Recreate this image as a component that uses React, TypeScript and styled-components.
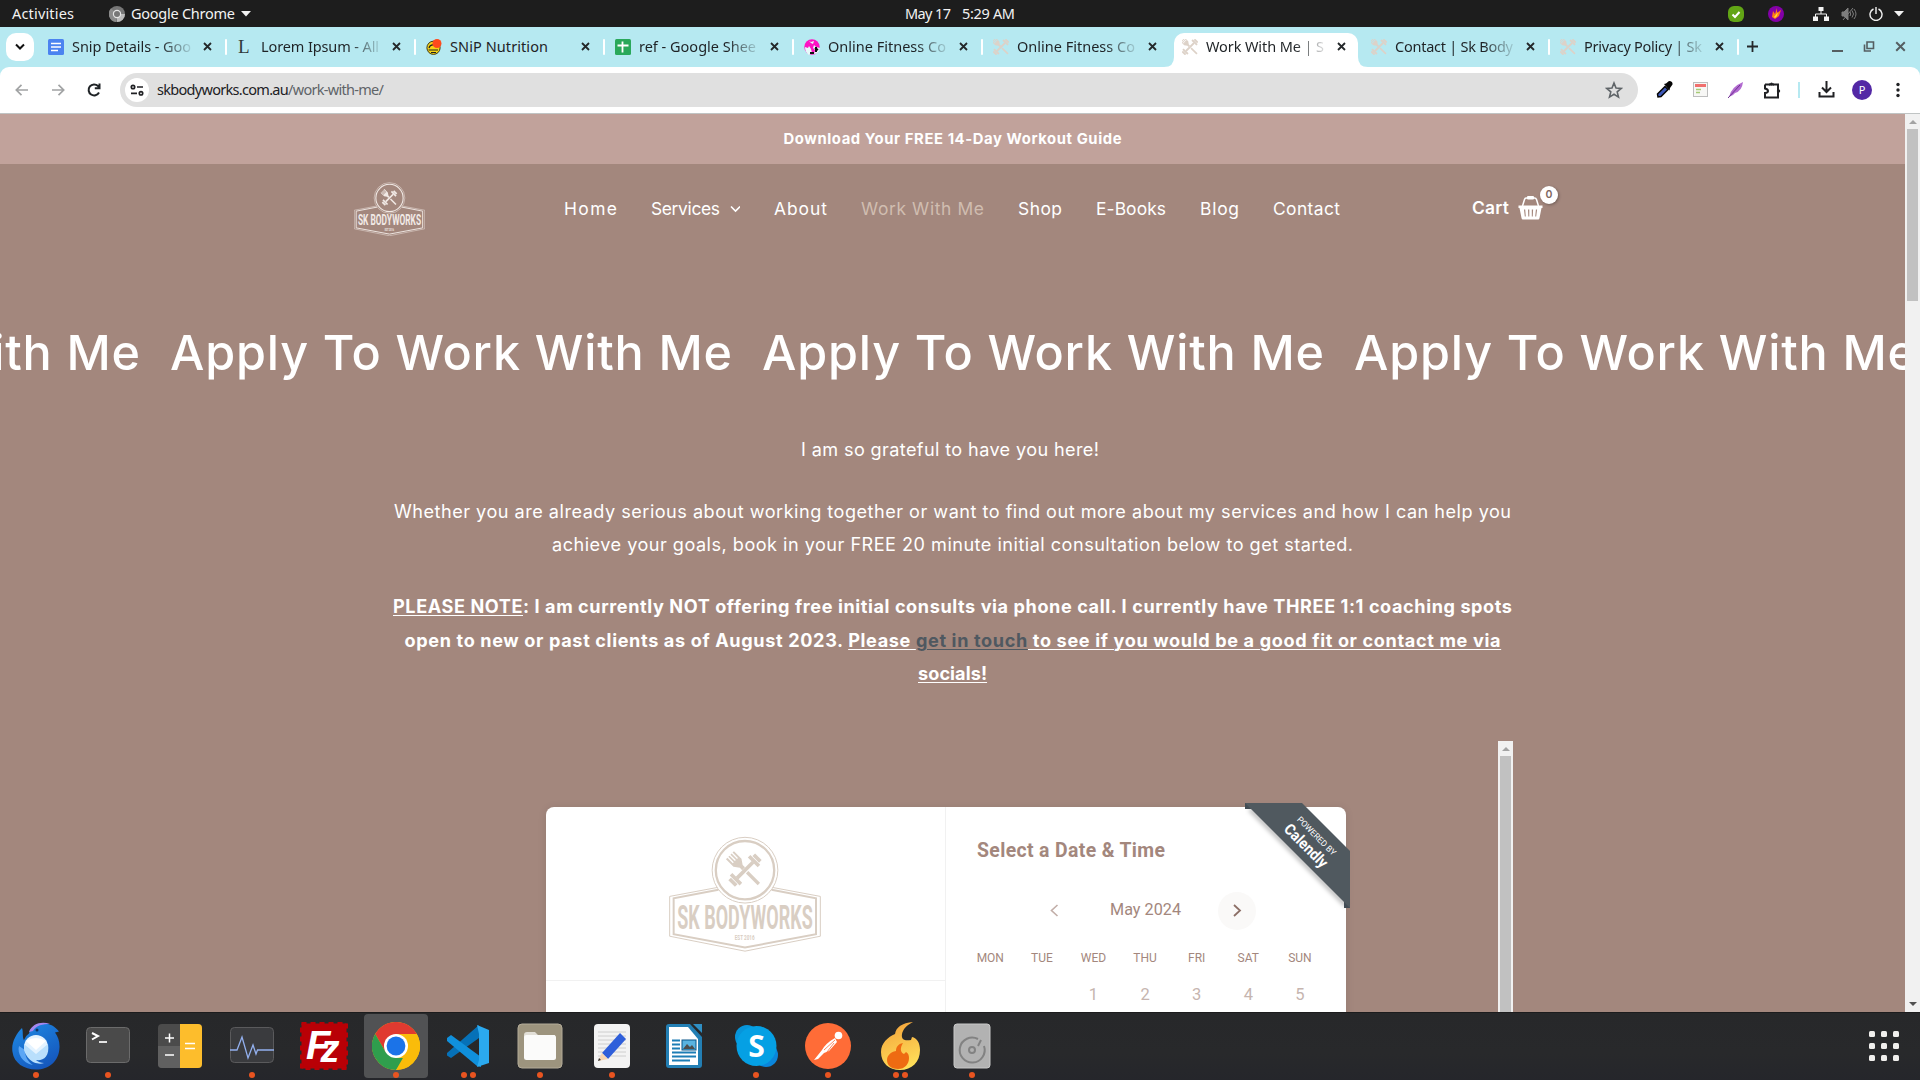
import React, { useLayoutEffect, useRef, useState } from "react";
import styled, { createGlobalStyle, css } from "styled-components";

const system = '"Noto Sans", "Open Sans", sans-serif';
const brand = 'Inter, "Open Sans", sans-serif';
const widget = 'Roboto, "Open Sans", sans-serif';

const GlobalStyle = createGlobalStyle`
  * { box-sizing: border-box; }
  body { margin: 0; overflow: hidden; background: #1d1d1d; }
`;

/* ---------- Text that is tracked to fill a given measure ---------- */

const Measure = styled.span<{ $width: number }>`
  display: block;
  flex: none;
  width: ${(p) => p.$width}px;
  white-space: pre;
`;

function Tracked({ width, children }: { width: number; children: React.ReactNode }) {
  const ref = useRef<HTMLSpanElement>(null);
  const [tracking, setTracking] = useState(0);
  useLayoutEffect(() => {
    const el = ref.current;
    if (!el) return;
    const natural = el.getBoundingClientRect().width;
    const count = (el.textContent || "").length;
    setTracking((width - natural) / Math.max(1, count - 1));
  }, [width]);
  return (
    <Measure $width={width}>
      <span ref={ref} style={{ letterSpacing: tracking }}>
        {children}
      </span>
    </Measure>
  );
}

/* ---------- Desktop ---------- */

const Screen = styled.div`
  width: 1920px;
  height: 1080px;
  display: grid;
  grid-template-rows: 27px 40px 47px 898px 68px;
  overflow: hidden;
`;

const TopBar = styled.header`
  display: grid;
  grid-template-columns: 1fr auto 1fr;
  align-items: center;
  padding: 0 16px 0 12px;
  background: #1d1d1d;
  color: #f2f2f2;
  font: 14.5px/27px ${system};
`;

const TopGroup = styled.div<{ $end?: boolean }>`
  display: flex;
  align-items: center;
  ${(p) => p.$end && css`justify-content: flex-end;`}
`;

const AppMenu = styled.div`
  display: flex;
  align-items: center;
  gap: 6px;
  margin-left: 35px;
`;

const Clock = styled.div`
  display: flex;
  gap: 11px;
  padding-left: 4px;
`;

const TrayIcon = styled.span<{ $gap: number }>`
  display: flex;
  margin-left: ${(p) => p.$gap}px;
`;

/* ---------- Browser chrome ---------- */

const TabStrip = styled.div`
  display: flex;
  align-items: flex-start;
  padding: 6px 8px 0 6px;
  background: #b6e9f1;
  color: #1f2326;
  font: 14.5px/27px ${system};
`;

const TabSearch = styled.button`
  width: 28px;
  height: 28px;
  margin-right: 4px;
  padding: 0;
  display: grid;
  place-items: center;
  border: 0;
  border-radius: 10px;
  background: #fff;
`;

const TabBox = styled.div<{ $active?: boolean }>`
  position: relative;
  width: 189px;
  height: 34px;
  padding: 0 0 7px 10px;
  display: flex;
  align-items: center;
  ${(p) =>
    p.$active &&
    css`
      &::before {
        content: "";
        position: absolute;
        inset: 0 3px 0 2px;
        background: #fff;
        border-radius: 10px 10px 0 0;
      }
      & > svg:not([data-foot]), & > div, & > span { position: relative; }
    `}
`;

const Foot = styled.svg<{ $right?: boolean }>`
  position: absolute;
  bottom: 0;
  ${(p) => (p.$right ? "right: -7px; transform: scaleX(-1);" : "left: -8px;")}
`;

const TabTitle = styled.div<{ $fade: boolean }>`
  width: 119px;
  margin-left: 8px;
  overflow: hidden;
  ${(p) => p.$fade && css`mask-image: linear-gradient(to right, #000 88px, rgba(0, 0, 0, 0.12) 119px);`}
`;

const TabClose = styled.span`
  display: flex;
  margin-left: 12px;
`;

const TabDivider = styled.i<{ $hidden?: boolean }>`
  width: 2px;
  height: 16px;
  margin-left: auto;
  border-radius: 1px;
  background: ${(p) => (p.$hidden ? "transparent" : "#fff")};
`;

const NewTab = styled.span`
  display: flex;
  margin: 8px 0 0 8px;
`;

const WindowButtons = styled.div`
  display: flex;
  align-items: center;
  gap: 20px;
  height: 27px;
  margin-left: auto;
  padding-right: 6px;
`;

const ToolbarBacking = styled.div`
  display: flex;
  background: #b6e9f1;
`;

const Toolbar = styled.div`
  flex: 1;
  display: flex;
  align-items: center;
  padding: 0 4px 1px 12px;
  background: #fff;
  border-bottom: 1px solid #c0c4c4;
  border-radius: 9px 9px 0 0;
`;

const NavArrows = styled.div`
  display: flex;
  gap: 16px;
  width: 108px;
`;

const UrlField = styled.div`
  display: flex;
  align-items: center;
  width: 1518px;
  height: 34px;
  padding: 0 15px 0 5px;
  border-radius: 17px;
  background: #e0e0e0;
  color: #202124;
  font: 14.5px/32px ${system};
`;

const SiteInfo = styled.span`
  width: 24px;
  height: 24px;
  margin-right: 8px;
  display: grid;
  place-items: center;
  border-radius: 50%;
  background: #fff;
`;

const UrlText = styled.div`
  height: 34px;
`;

const UrlPath = styled.span`
  color: #5f6468;
`;

const Push = styled.span`
  margin-left: auto;
  display: flex;
`;

const ToolIcons = styled.div`
  display: grid;
  grid-template-columns: repeat(4, 36px) 18px repeat(3, 36px);
  place-items: center;
  margin-left: 8px;
`;

const ToolDivider = styled.i`
  width: 2px;
  height: 16px;
  background: #b6e9f1;
`;

const Avatar = styled.span`
  width: 20px;
  height: 20px;
  border-radius: 50%;
  background: #5328a5;
  color: #fff;
  text-align: center;
  font: 11px/20px ${system};
`;

/* ---------- Web page ---------- */

const Viewport = styled.div`
  display: flex;
  min-height: 0;
  overflow: hidden;
`;

const Page = styled.main`
  width: 1905px;
  height: 898px;
  overflow: hidden;
  background: #a3877d;
  color: #fff;
  font-family: ${brand};
`;

const ScrollTrack = styled.div`
  width: 15px;
  height: 100%;
  flex: none;
  display: flex;
  flex-direction: column;
  align-items: center;
  background: #f1f1f1;
`;

const ScrollArrow = styled.i<{ $down?: boolean; $dim?: boolean }>`
  width: 0;
  height: 0;
  margin: ${(p) => (p.$down ? "auto 0 6px" : "6px 0 5px")};
  border: 4px solid transparent;
  border-top-width: ${(p) => (p.$down ? 4 : 0)}px;
  border-bottom-width: ${(p) => (p.$down ? 0 : 4)}px;
  border-${(p) => (p.$down ? "top" : "bottom")}-color: ${(p) => (p.$dim ? "#a3a3a3" : "#505050")};
`;

const ScrollThumb = styled.i<{ $height: number }>`
  width: 11px;
  height: ${(p) => p.$height}px;
  flex: none;
  background: #c1c1c1;
`;

const Banner = styled.div`
  height: 50px;
  display: flex;
  justify-content: center;
  background: #c1a29b;
  font-weight: 700;
  font-size: 14.8px;
  line-height: 50px;
`;

const SiteHeader = styled.div`
  height: 90px;
  display: flex;
  align-items: center;
  padding-left: 354px;
  font-size: 17.4px;
  line-height: 24px;
`;

const SiteNav = styled.nav`
  display: flex;
  gap: 34px;
  width: 908px;
  margin-left: 139px;
`;

const NavItem = styled.a<{ $current?: boolean }>`
  display: flex;
  align-items: center;
  gap: 10px;
  color: ${(p) => (p.$current ? "#d0bdb0" : "#fff")};
`;

const Cart = styled.div`
  position: relative;
  display: flex;
  align-items: center;
  gap: 9px;
  margin-top: -2px;
  font-weight: 600;
`;

const CartBadge = styled.span`
  position: absolute;
  left: 68px;
  top: -10px;
  width: 18px;
  height: 18px;
  border-radius: 50%;
  background: #fff;
  color: #80675f;
  text-align: center;
  font-size: 10.5px;
  line-height: 18px;
  box-shadow: 1px 1px 3px rgba(0, 0, 0, 0.3);
`;

const Marquee = styled.h1`
  width: 1905px;
  height: 60px;
  margin: 69px 0 49px;
  overflow: hidden;
  font-size: 48.5px;
  line-height: 59px;
  font-weight: 500;
`;

const MarqueeTrack = styled.div`
  display: flex;
  gap: 30px;
  margin-left: -422px;
`;

const Copy = styled.section`
  display: flex;
  flex-direction: column;
  align-items: center;
  gap: 28.6px;
  padding-top: 0.6px;
  font-size: 18.1px;
  line-height: 33.5px;
`;

const Paragraph = styled.p<{ $strong?: boolean; $shift?: number }>`
  display: flex;
  flex-direction: column;
  align-items: center;
  margin: 0;
  padding-right: ${(p) => p.$shift || 0}px;
  font-weight: ${(p) => (p.$strong ? 700 : 400)};
  u { text-decoration-thickness: 1px; text-underline-offset: 2px; }
`;

const TouchLink = styled.a`
  color: #4f5860;
  text-decoration: underline;
  text-decoration-thickness: 1px;
  text-underline-offset: 2px;
`;

/* ---------- Booking widget ---------- */

const Embed = styled.div`
  display: flex;
  justify-content: space-between;
  width: 967px;
  height: 400px;
  margin: 50px 0 0 546px;
`;

const EmbedScroll = styled.div`
  display: flex;
  height: 271px;
  overflow: hidden;
`;

const BookingCard = styled.div`
  position: relative;
  width: 800px;
  height: 320px;
  margin-top: 66px;
  display: grid;
  grid-template-columns: 400px 400px;
  border-radius: 8px;
  background: #fff;
  box-shadow: 0 1px 8px rgba(0, 0, 0, 0.1);
`;

const HostPane = styled.div`
  border-right: 1px solid #f1f1f1;
`;

const HostLogo = styled.div`
  height: 174px;
  display: grid;
  justify-content: center;
  padding: 29px 2px 0 0;
  border-bottom: 1px solid #f1f1f1;
`;

const PickerPane = styled.div`
  padding: 29px 0 0 31px;
  color: #a3877d;
  font-family: ${widget};
`;

const PickerTitle = styled.h2`
  margin: 0;
  font-size: 19.4px;
  line-height: 30px;
  font-weight: 700;
`;

const MonthRow = styled.div`
  display: flex;
  align-items: center;
  height: 38px;
  margin-top: 26px;
  padding-left: 72px;
  font-size: 16.2px;
  line-height: 35px;
`;

const MonthLabel = styled.span`
  width: 108px;
  height: 38px;
  margin-left: 50px;
`;

const NextMonth = styled.span`
  width: 38px;
  height: 38px;
  display: grid;
  place-items: center;
  border-radius: 50%;
  background: #faf9f8;
`;

const WeekRow = styled.div<{ $days?: boolean }>`
  display: grid;
  grid-template-columns: repeat(7, 51.6px);
  justify-items: center;
  margin-left: -12.5px;
  margin-top: ${(p) => (p.$days ? 17 : 18)}px;
  font-size: ${(p) => (p.$days ? 16.5 : 12)}px;
  line-height: 20px;
  color: ${(p) => (p.$days ? "#c6b5af" : "#a3877d")};
`;

const Ribbon = styled.svg`
  position: absolute;
  left: 699px;
  top: -4px;
  font-family: ${widget};
`;

/* ---------- Dock ---------- */

const Dock = styled.footer`
  display: flex;
  background: linear-gradient(#27282a, #28292b 60%, #25262b);
  border-top: 1px solid #1c1c1d;
`;

const DockSlot = styled.div<{ $active?: boolean }>`
  width: 64px;
  height: 64px;
  margin: 1px 4px 0;
  padding-top: 8px;
  display: flex;
  flex-direction: column;
  align-items: center;
  border-radius: 4px;
  background: ${(p) => (p.$active ? "#515254" : "transparent")};
`;

const Dots = styled.div`
  display: flex;
  gap: 3px;
  height: 6px;
  margin-top: 2px;
  i { width: 6px; height: 6px; border-radius: 50%; background: #e95420; }
`;

const AppGrid = styled.div`
  display: grid;
  grid-template-columns: repeat(3, 6px);
  grid-auto-rows: 6px;
  gap: 6px;
  margin: 18px 21px 0 auto;
  i { border-radius: 1.5px; background: #f0efed; }
`;

/* ---------- Drawings ---------- */

const CrossMark = () => (
  <>
    <g transform="rotate(-45)">
      <path d="M-17-64h6v23h4v-23h5v23h4v-23h5v23h4v-23h6v32l-11 16v10H-6v-10l-11-16z" />
      <rect x="-5" y="9" width="10" height="50" />
    </g>
    <g transform="rotate(45)">
      <rect x="-5.5" y="-34" width="11" height="68" />
      <path d="M-21-44h42v11h-42zM-14-57h28v11h-28zM-21 33h42v11h-42zM-14 46h28v11h-28z" />
    </g>
  </>
);

const BodyworksLogo = ({ width, color }: { width: number; color: string }) => (
  <svg width={width} height={(width * 350) / 458} viewBox="-1 -1 458 350" fill="none" stroke={color}>
    <path d="M145 154 1 181v120l227 45 227-45V181l-144-27" strokeWidth="3" />
    <path d="M148 161 13 187v108l215 40 214-40V187l-134-26" strokeWidth="6" />
    <circle cx="228" cy="102" r="99" strokeWidth="3" />
    <circle cx="228" cy="102" r="88" strokeWidth="7" />
    <g fill={color} stroke="none">
      <g transform="translate(228 102)"><CrossMark /></g>
      <g fontFamily={widget} fontWeight="700">
        <text x="24" y="278" fontSize="100" textLength="408" lengthAdjust="spacingAndGlyphs">SK BODYWORKS</text>
        <text x="197" y="312" fontSize="21" textLength="60" lengthAdjust="spacingAndGlyphs">EST 2016</text>
      </g>
    </g>
  </svg>
);

const CrossFavicon = () => (
  <svg width="16" height="16" viewBox="-48 -48 96 96" fill="#ddd2c8"><CrossMark /></svg>
);
const DocsIcon = () => (
  <svg width="16" height="16"><rect width="16" height="16" rx="1.5" fill="#4b83f0" /><path d="M3 4.5h10M3 8h10M3 11.5h7" stroke="#fff" strokeWidth="1.7" /></svg>
);
const LoremIcon = () => (
  <svg width="16" height="16" fill="#30393b"><text x="1" y="14" fontFamily='"Liberation Serif", serif' fontSize="19">L</text></svg>
);
const SnipIcon = () => (
  <svg width="16" height="16"><circle cx="7.5" cy="8.8" r="6.600" fill="#f5d416" stroke="#413a16" /><path d="M3 9q1-4 5-3M2.500 11h9.500M5 13.500h5" stroke="#222" strokeWidth="1.2" fill="none" /><circle cx="11" cy="4.500" r="4.500" fill="#ff4a1c" /></svg>
);
const SheetsIcon = () => (
  <svg width="16" height="16"><rect width="16" height="16" rx="1.5" fill="#2aa85a" /><path d="M7.500 2.500v11M2.500 6.500h11" stroke="#fff" strokeWidth="1.8" /></svg>
);
const PinkIcon = () => (
  <svg width="16" height="16"><circle cx="8" cy="8" r="7.7" fill="#ff12c4" /><path d="M1 8l3 1 1-2 2 3 1 4-3 2C2 14 1 11 1 8zM10 6l2 2 4 1c0 3-3 6-6 6l1-4-2-2zM5 2l2 1 3-1-1 3-2-1z" fill="#e8fafa" /><path d="M6 14h4M12 8v5M11 9l3 2" stroke="#111" strokeWidth="2" /></svg>
);

const Cross = ({ size = 9, color = "#24282a", weight = 1.8 }: { size?: number; color?: string; weight?: number }) => (
  <svg width={size} height={size} viewBox="0 0 9 9"><path d="M1 1l7 7M8 1L1 8" stroke={color} strokeWidth={weight} /></svg>
);
const Chevron = ({ d, w, h, color, weight = 1.6 }: { d: string; w: number; h: number; color: string; weight?: number }) => (
  <svg width={w} height={h} fill="none" stroke={color} strokeWidth={weight}><path d={d} /></svg>
);
const CaretDown = () => (<svg width="10" height="6"><path d="M0 0h10L5 5.5z" fill="#f2f2f2" /></svg>);

const Basket = () => (
  <svg width="25" height="24" viewBox="0 0 25 24">
    <path d="M4.5 10 6.5 3.5Q7 2 8.5 2h8q1.500 0 2 1.500L20.500 10" fill="none" stroke="#fff" strokeWidth="1.500" />
    <rect x="9" y="0" width="7" height="3.500" rx="1" fill="#fff" />
    <path fillRule="evenodd" fill="#fff" d="M.5 9.500h24v2.500h-1L21.500 22q-.2 1.500-1.500 1.500H5Q3.700 23.500 3.500 22L1.500 12h-1zM6 13.500l.8 7h1l-.6-7zM10 13.500l.3 7h1v-7zM13.800 13.500v7h1l.3-7zM17.900 13.500l-.7 7h1l.9-7z" />
  </svg>
);

const Back = ({ flip }: { flip?: boolean }) => (
  <svg width="20" height="20" viewBox="0 0 20 20" fill="none" stroke="#a1a3a4" strokeWidth="1.7">
    <path d={flip ? "M4 10h11M10.500 4.800 15.700 10l-5.200 5.200" : "M16 10H5M9.500 4.800 4.300 10l5.200 5.200"} />
  </svg>
);
const Reload = () => (
  <svg width="20" height="20" viewBox="0 0 20 20" fill="none" stroke="#1f2326" strokeWidth="2"><path d="M15 12.500A5.500 5.500 0 1 1 14 6l1.500 1.700M15.500 3.500v4.700h-4.700" /></svg>
);

type DockKind = "mail" | "term" | "calc" | "monitor" | "filezilla" | "chrome" | "code" | "files" | "editor" | "writer" | "skype" | "postman" | "flame" | "disk";

const dockArt: Record<DockKind, React.ReactNode> = {
  mail: (
    <>
      <defs><linearGradient id="bird" x1="0" y1="0" x2="0.600" y2="1"><stop offset="0" stopColor="#1f8ce6" /><stop offset="1" stopColor="#1558bd" /></linearGradient></defs>
      <path d="M10 6C4 12-1 21 .500 30 2 41 12 47.500 24 47.500c13 0 23-8 23.500-22 .3-6-1.500-11-4.500-15l4-1C43 4 37 1 30 1.500c-8 .5-12 6-13 10-4 3-5 7-5 7C10 14 11.500 10 10 6z" fill="url(#bird)" />
      <path d="M17 10C20 2 29-1 38 2c-7 0-14 1-17 7z" fill="#a487ef" />
      <path d="M7 24c-2 7 3 17 14 19-6-4-8-9-8-15z" fill="#5ba6f5" />
      <circle cx="24" cy="25" r="12" fill="#e4f3ff" />
      <path d="M12 22l12 10 12-10c2 13-5 17-12 16 2 2 5 3 8 3-8 3-21-4-20-19z" fill="#b9dffc" />
      <path d="M14 19l10 9 10-9q-10-6-20 0z" fill="#fff" />
      <circle cx="25" cy="8" r="1.500" fill="#14315e" />
    </>
  ),
  term: (
    <><rect x="2.500" y="5.500" width="43" height="35" rx="4" fill="#4a4a4a" stroke="#6b6b6b" /><path d="M8 11l6 3-6 3.500" fill="none" stroke="#fff" strokeWidth="2" /><path d="M15 20h8" stroke="#fff" strokeWidth="1.700" /></>
  ),
  calc: (
    <><rect x="2" y="2" width="44" height="44" rx="4" fill="#4b4b4b" /><path d="M2 24h22v22H6q-4 0-4-4z" fill="#606060" /><path d="M24 2h18q4 0 4 4v36q0 4-4 4H24z" fill="#fdbd2c" /><path d="M9 16h9M13.500 11.500v9M9 33h9M29 21.500h10M29 26.500h10" stroke="#fff" strokeWidth="1.500" /></>
  ),
  monitor: (
    <><rect x="2.500" y="5.500" width="43" height="35" rx="4" fill="#3a3b3e" stroke="#5a5a5c" /><path d="M2 28h7L14 15l6 21 5-13 3 9 1.500-4H46" fill="none" stroke="#93b0ee" strokeWidth="1.300" /></>
  ),
  filezilla: (
    <><rect x="1.500" y="1.500" width="45" height="45" fill="#b90006" /><rect x="1.500" y="1.500" width="45" height="45" fill="none" stroke="#b90006" strokeWidth="3.500" strokeDasharray="5 4" />
      <text x="6" y="37" fill="#fff" fontFamily='"Liberation Sans", sans-serif' fontWeight="700" fontStyle="italic" fontSize="40">F<tspan dx="-10" dy="3" fontSize="38">z</tspan></text></>
  ),
  chrome: (
    <>
      <circle cx="24" cy="24" r="24" fill="#fabc0a" />
      <path d="M3.200 12A24 24 0 0 1 44.800 12H24L13.600 30z" fill="#e03a30" />
      <path d="M3.200 12 13.600 30 24 36h10.400L24 48A24 24 0 0 1 3.200 12z" fill="#2f9e4d" />
      <path d="M34.400 30 24 48A24 24 0 0 0 44.800 12H24z" fill="#fabc0a" />
      <circle cx="24" cy="24" r="12" fill="#fff" /><circle cx="24" cy="24" r="9.400" fill="#1b73e8" />
    </>
  ),
  code: (
    <><path d="M3 31 35 3v13L7 36l-4-2.500z" fill="#0671b8" /><path d="M3 16l4-3 30 22v10l-4-1L3 19z" fill="#1090dc" /><path d="M33 3l12 5v33l-12 4 2-7V12z" fill="#2ba9ef" /></>
  ),
  files: (
    <><rect x="2" y="2" width="44" height="44" rx="4" fill="#9d947e" stroke="#b3ab98" /><path d="M8 13q0-3 3-3h8l3 3h17v10H8z" fill="#e2dfd7" /><rect x="8" y="13" width="32" height="25" rx="2.500" fill="#fbfbfa" /></>
  ),
  editor: (
    <><rect x="6" y="2" width="36" height="44" rx="4" fill="#f3f3f3" /><path d="M10 10h28M10 14h28M10 18h28M10 22h28M10 26h28M10 30h28M10 34h28" stroke="#cecece" /><path d="M14 31 32 11l6 6-18 20z" fill="#2f5fda" /><path d="M14 31l6 6-10 2z" fill="#f7d6b2" /><path d="M11 36l2 2-3 1z" fill="#333" /></>
  ),
  writer: (
    <><path d="M9 2h21l12 13v28q0 3-3 3H9q-3 0-3-3V5q0-3 3-3z" fill="#237fb4" /><path d="M33 2h9v9z" fill="#2f8fc4" /><path d="M9 5h19l10 12v26H9z" fill="#fff" /><path d="M12 18.500h8M12 22.500h8M12 26.500h8M12 30.500h24M12 34.500h24M12 38.500h18" stroke="#1c7db5" strokeWidth="2" /><rect x="22" y="18" width="14" height="10" fill="#59b3e0" stroke="#0b578a" /><path d="M23 27l4-5 3 3 2-2 3 4z" fill="#4d4d4d" /></>
  ),
  skype: (
    <><circle cx="15" cy="15" r="12" fill="#0795da" /><circle cx="34" cy="33" r="12" fill="#0a86dc" /><circle cx="24.500" cy="24" r="20" fill="#05a0e4" /><text x="24.500" y="35" textAnchor="middle" fill="#fff" fontFamily='"Open Sans", sans-serif' fontWeight="700" fontSize="30">S</text></>
  ),
  postman: (
    <><circle cx="24" cy="24" r="23" fill="#ff6c37" /><circle cx="34.500" cy="13.500" r="3.800" fill="#fff" /><path d="M31 16q-9 5-13 12l-8 10 4-1 6-6 5-2 8-9z" fill="#fff" /><path d="M20 28 31 18M23 30l7-9" stroke="#ff6c37" strokeWidth="0.800" /></>
  ),
  flame: (
    <><defs><linearGradient id="fire" x1="0.300" y1="0" x2="0.600" y2="1"><stop offset="0" stopColor="#f4a43c" /><stop offset="1" stopColor="#ffe15a" /></linearGradient></defs>
      <path d="M37 0C26 1 20 5 19 12 12 15 5 21 5 30c0 11 8 18 19 18 12 0 20-8 20-20 0-7-3-12-8-13l-1 3c-6 1-10 0-9-6 1-5 5-9 11-12z" fill="url(#fire)" /><path d="M27 21c-5 1-7 4-7 8-6 1-9 5-9 9 0 6 5 9 11 9 7 0 11-5 11-11 0-3-1-5-3-6l-2 2c-4-2-4-6-1-11z" fill="#ee6b12" /></>
  ),
  disk: (
    <><rect x="6" y="2" width="36" height="44" rx="3" fill="#b2b2b2" stroke="#c8c8c8" /><path d="M30 17a12.500 12.500 0 1 0 6 7" fill="none" stroke="#828282" strokeWidth="2" /><path d="M30 24l3-6" stroke="#828282" strokeWidth="2" /><circle cx="24" cy="28" r="3" fill="none" stroke="#828282" strokeWidth="2" /></>
  ),
};

/* ---------- Data ---------- */

const tabs = [
  { icon: <DocsIcon />, title: "Snip Details - Goo", width: 119, fade: true },
  { icon: <LoremIcon />, title: "Lorem Ipsum - All", width: 118, fade: true },
  { icon: <SnipIcon />, title: "SNiP Nutrition", width: 98, fade: false },
  { icon: <SheetsIcon />, title: "ref - Google Shee", width: 117, fade: true },
  { icon: <PinkIcon />, title: "Online Fitness Co", width: 118, fade: true },
  { icon: <CrossFavicon />, title: "Online Fitness Co", width: 118, fade: true },
  { icon: <CrossFavicon />, title: "Work With Me | S", width: 118, fade: true, active: true },
  { icon: <CrossFavicon />, title: "Contact | Sk Body", width: 118, fade: true },
  { icon: <CrossFavicon />, title: "Privacy Policy | Sk", width: 118, fade: true },
];

const navLinks = [
  { label: "Home", width: 53 },
  { label: "Services", width: 69, menu: true },
  { label: "About", width: 53 },
  { label: "Work With Me", width: 123, current: true },
  { label: "Shop", width: 44 },
  { label: "E-Books", width: 70 },
  { label: "Blog", width: 39 },
  { label: "Contact", width: 67 },
];

const dockApps: { kind: DockKind; windows: number }[] = [
  { kind: "mail", windows: 1 },
  { kind: "term", windows: 1 },
  { kind: "calc", windows: 0 },
  { kind: "monitor", windows: 1 },
  { kind: "filezilla", windows: 0 },
  { kind: "chrome", windows: 1 },
  { kind: "code", windows: 2 },
  { kind: "files", windows: 1 },
  { kind: "editor", windows: 1 },
  { kind: "writer", windows: 0 },
  { kind: "skype", windows: 1 },
  { kind: "postman", windows: 1 },
  { kind: "flame", windows: 2 },
  { kind: "disk", windows: 1 },
];

/* ---------- Sections ---------- */

const SystemBar = () => (
  <TopBar>
    <TopGroup>
      <Tracked width={62}>Activities</Tracked>
      <AppMenu>
        <svg width="16" height="16"><circle cx="8" cy="8" r="8" fill="#777" /><path d="M8 8 2 2.500A8 8 0 0 0 7 16z" fill="#8b8b8b" /><path d="M8 8h8a8 8 0 0 1-8 8z" fill="#bbb" /><circle cx="8" cy="8" r="4.200" fill="#e5e5e5" /><circle cx="8" cy="8" r="3" fill="#777" /></svg>
        <Tracked width={104}>Google Chrome</Tracked>
        <CaretDown />
      </AppMenu>
    </TopGroup>
    <Clock><Tracked width={46}>May 17</Tracked><Tracked width={53}>5:29 AM</Tracked></Clock>
    <TopGroup $end>
      <TrayIcon $gap={0}><svg width="16" height="16"><rect width="16" height="16" rx="6" fill="#62a515" /><path d="M4.500 8.500 7 11l4.500-5" fill="none" stroke="#fff" strokeWidth="2" /></svg></TrayIcon>
      <TrayIcon $gap={24}><svg width="16" height="16"><circle cx="8" cy="8" r="8" fill="#8400a8" /><path d="M4 11 5 5l2 3 2-6v5l4-3-2 6-4 3z" fill="#ff7b16" /><path d="M6 11l4-5-1 4-2 2z" fill="#ffdf35" /></svg></TrayIcon>
      <TrayIcon $gap={29}><svg width="16" height="14"><path d="M5.500 0h5v4h-5zM0 9.500h5V14H0zM11 9.500h5V14h-5z" fill="#f2f2f2" /><path d="M8 4v3M2.500 10V7h11v3" fill="none" stroke="#f2f2f2" /></svg></TrayIcon>
      <TrayIcon $gap={12}><svg width="16" height="14" fill="none" stroke="#7e7e7e"><path d="M1 5h2l4-4v12L3 9H1z" fill="#7e7e7e" /><path d="M9 5q1.500 2 0 4M11 3.500q3 3.500 0 7M13 2q4 5 0 10M2 13 12 1" /></svg></TrayIcon>
      <TrayIcon $gap={12}><svg width="14" height="14" fill="none" stroke="#f2f2f2" strokeWidth="1.400"><path d="M4.500 2A6 6 0 1 0 9.500 2M7 0v7" /></svg></TrayIcon>
      <TrayIcon $gap={11}><CaretDown /></TrayIcon>
    </TopGroup>
  </TopBar>
);

const Tabs = () => (
  <TabStrip>
    <TabSearch><Chevron d="M1 1.500l4 4 4-4" w={10} h={8} color="#111" weight={2} /></TabSearch>
    {tabs.map((t, i) => (
      <TabBox key={i} $active={t.active}>
        {t.active && (
          <>
            <Foot data-foot width="10" height="10"><path d="M10 0v10H0q10 0 10-10z" fill="#fff" /></Foot>
            <Foot data-foot $right width="10" height="10"><path d="M10 0v10H0q10 0 10-10z" fill="#fff" /></Foot>
          </>
        )}
        {t.icon}
        <TabTitle $fade={t.fade}><Tracked width={t.width}>{t.title}</Tracked></TabTitle>
        <TabClose><Cross /></TabClose>
        <TabDivider $hidden={i === 5 || i === 6} />
      </TabBox>
    ))}
    <NewTab><svg width="11" height="11"><path d="M5.500 0v11M0 5.500h11" stroke="#24282a" strokeWidth="1.800" /></svg></NewTab>
    <WindowButtons>
      <svg width="11" height="12"><path d="M0 10h11" stroke="#555e61" strokeWidth="2" /></svg>
      <svg width="12" height="12" fill="none" stroke="#555e61" strokeWidth="1.600"><path d="M4 1h6.500v6.500H4zM1.500 3.500V10H8" /></svg>
      <Cross size={11} color="#555e61" weight={1.600} />
    </WindowButtons>
  </TabStrip>
);

const AddressBar = () => (
  <ToolbarBacking>
    <Toolbar>
      <NavArrows><Back /><Back flip /><Reload /></NavArrows>
      <UrlField>
        <SiteInfo><svg width="14" height="12" fill="none" stroke="#202124" strokeWidth="1.700"><circle cx="3" cy="3" r="1.700" /><path d="M7 3h6M1 9.300h6" /><circle cx="11" cy="9.300" r="1.700" /></svg></SiteInfo>
        <UrlText><Tracked width={227}>skbodyworks.com.au<UrlPath>/work-with-me/</UrlPath></Tracked></UrlText>
        <Push><svg width="18" height="18" viewBox="0 0 18 18" fill="none" stroke="#5f6468" strokeWidth="1.600"><path d="M9 2l2 5 5.200.4-4 3.500 1.300 5.200L9 13.300l-4.500 2.800 1.300-5.200-4-3.500L7 7z" /></svg></Push>
      </UrlField>
      <ToolIcons>
        <svg width="17" height="17"><path d="M2 16 1.500 13 9 5.500l3 3L5 15.500z" fill="#3d58b8" stroke="#050505" strokeWidth="1.500" /><path d="M8 3l2-.500L13 0q4 0 3.500 3.500L14 7l-.500 2.500z" fill="#050505" /></svg>
        <svg width="15" height="15"><rect x=".5" y=".5" width="14" height="14" fill="#f7f7f5" stroke="#bdbdbd" /><path d="M2 3.500h11" stroke="#f0706e" strokeWidth="3" /><path d="M3 7.500h5M3 10.500h4" stroke="#a6cb75" strokeWidth="1.500" /></svg>
        <svg width="16" height="16"><path d="M1 15Q3 5 15 0 14 9 7 11L5 13z" fill="#b26bd0" /><path d="M0 16 12 3" stroke="#6e3192" /></svg>
        <svg width="18" height="18" fill="none" stroke="#202124" strokeWidth="2"><path d="M2 3.500h5M10 3.500h5V8M15 12v4.500H2V12q3-.300 3-2T2 7.500v-4" /><circle cx="8.500" cy="3" r="1.500" fill="#202124" stroke="none" /><circle cx="15.500" cy="10" r="1.700" fill="#202124" stroke="none" /><path d="M15 7v6M6 3.500h5" /></svg>
        <ToolDivider />
        <svg width="17" height="17" fill="none" stroke="#202124" strokeWidth="2"><path d="M8.500 0v10M4 6.500 8.500 11 13 6.500M1.500 11v4.500h14V11" /></svg>
        <Avatar>P</Avatar>
        <svg width="20" height="16" fill="#202124"><circle cx="10" cy="2.500" r="1.700" /><circle cx="10" cy="8" r="1.700" /><circle cx="10" cy="13.500" r="1.700" /></svg>
      </ToolIcons>
    </Toolbar>
  </ToolbarBacking>
);

const Booking = () => (
  <Embed>
    <BookingCard>
      <HostPane><HostLogo><BodyworksLogo width={152} color="#d9cec3" /></HostLogo></HostPane>
      <PickerPane>
        <PickerTitle><Tracked width={188}>Select a Date &amp; Time</Tracked></PickerTitle>
        <MonthRow>
          <Chevron d="M8.500 1 2.500 6.500l6 5.500" w={11} h={13} color="#c2aea8" />
          <MonthLabel><Tracked width={71}>May 2024</Tracked></MonthLabel>
          <NextMonth><Chevron d="M2 1l6 5.500L2 12" w={10} h={13} color="#8c6f66" weight={1.800} /></NextMonth>
        </MonthRow>
        <WeekRow>{["MON", "TUE", "WED", "THU", "FRI", "SAT", "SUN"].map((d) => <span key={d}>{d}</span>)}</WeekRow>
        <WeekRow $days><span /><span />{[1, 2, 3, 4, 5].map((d) => <span key={d}>{d}</span>)}</WeekRow>
      </PickerPane>
      <Ribbon width="112" height="116">
        <defs><filter id="soft" x="-20%" y="-20%" width="140%" height="140%"><feGaussianBlur stdDeviation="2" /></filter></defs>
        <path d="M5 6 101 102" stroke="#000" strokeOpacity=".25" strokeWidth="5" filter="url(#soft)" />
        <path d="M0 0h6v6H0zM99 99h6v6h-6z" fill="#424c54" />
        <path d="M0 0h57l48 48v57z" fill="#50595f" />
        <g fill="#fff">
          <text transform="translate(51.400 17) rotate(45)" fontSize="8.500" textLength="51" lengthAdjust="spacingAndGlyphs">POWERED BY</text>
          <text transform="translate(38 27) rotate(45)" fontSize="15.500" fontWeight="700" textLength="55" lengthAdjust="spacingAndGlyphs">Calendly</text>
        </g>
      </Ribbon>
    </BookingCard>
    <EmbedScroll><ScrollTrack><ScrollArrow $dim /><ScrollThumb $height={300} /></ScrollTrack></EmbedScroll>
  </Embed>
);

const WebPage = () => (
  <Viewport>
    <Page>
      <Banner><Tracked width={338}>Download Your FREE 14-Day Workout Guide</Tracked></Banner>
      <SiteHeader>
        <BodyworksLogo width={71} color="#f1e9e5" />
        <SiteNav>
          {navLinks.map((l) => (
            <NavItem key={l.label} $current={l.current}>
              <Tracked width={l.width}>{l.label}</Tracked>
              {l.menu && <Chevron d="M1 1.500l4.500 4.500L10 1.500" w={10} h={8} color="#fff" />}
            </NavItem>
          ))}
        </SiteNav>
        <Cart><Tracked width={37}>Cart</Tracked><Basket /><CartBadge>0</CartBadge></Cart>
      </SiteHeader>
      <Marquee>
        <MarqueeTrack>
          {[0, 1, 2, 3].map((n) => <Tracked key={n} width={562}>Apply To Work With Me</Tracked>)}
        </MarqueeTrack>
      </Marquee>
      <Copy>
        <Paragraph $shift={5}><Tracked width={298}>I am so grateful to have you here!</Tracked></Paragraph>
        <Paragraph>
          <Tracked width={1117}>Whether you are already serious about working together or want to find out more about my services and how I can help you</Tracked>
          <Tracked width={801}>achieve your goals, book in your FREE 20 minute initial consultation below to get started.</Tracked>
        </Paragraph>
        <Paragraph $strong>
          <Tracked width={1119}><u>PLEASE NOTE</u>: I am currently NOT offering free initial consults via phone call. I currently have THREE 1:1 coaching spots</Tracked>
          <Tracked width={1096}>open to new or past clients as of August 2023. <u>Please </u><TouchLink>get in touch</TouchLink><u> to see if you would be a good fit or contact me via</u></Tracked>
          <Tracked width={69}><u>socials!</u></Tracked>
        </Paragraph>
      </Copy>
      <Booking />
    </Page>
    <ScrollTrack><ScrollArrow $dim /><ScrollThumb $height={172} /><ScrollArrow $down /></ScrollTrack>
  </Viewport>
);

export default function App() {
  return (
    <>
      <GlobalStyle />
      <Screen>
        <SystemBar />
        <Tabs />
        <AddressBar />
        <WebPage />
        <Dock>
          {dockApps.map((a) => (
            <DockSlot key={a.kind} $active={a.kind === "chrome"}>
              <svg width="48" height="48" viewBox="0 0 48 48">{dockArt[a.kind]}</svg>
              <Dots>{Array.from({ length: a.windows }, (_, i) => <i key={i} />)}</Dots>
            </DockSlot>
          ))}
          <AppGrid>{Array.from({ length: 9 }, (_, i) => <i key={i} />)}</AppGrid>
        </Dock>
      </Screen>
    </>
  );
}
